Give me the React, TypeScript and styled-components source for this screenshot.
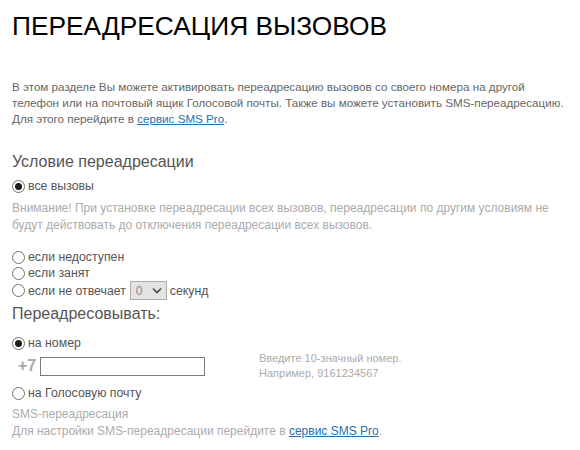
import React from "react";
import styled, { createGlobalStyle } from "styled-components";

const Global = createGlobalStyle`
  html, body { margin: 0; padding: 0; background: #fff; }
  body { font-family: "Liberation Sans", Arial, sans-serif; }
`;

const Page = styled.div`
  padding: 11px 0 0 12px;
  width: 568px;
`;

const Title = styled.h1`
  margin: 0;
  font-size: 26.3px;
  line-height: 30px;
  font-weight: normal;
  color: #000;
`;

const Text = styled.p<{ $tone?: "body" | "muted"; $mt?: number; $lh?: number; $fs?: number }>`
  margin: ${(p) => p.$mt ?? 0}px 0 0 0;
  font-size: ${(p) => p.$fs ?? 12}px;
  line-height: ${(p) => p.$lh ?? 16}px;
  color: ${(p) => (p.$tone === "muted" ? "#ababab" : "#666")};
  white-space: nowrap;
`;

const Link = styled.a`
  color: #2b6ea6;
  text-decoration: underline;
`;

const Heading = styled.h2<{ $mt: number }>`
  margin: ${(p) => p.$mt}px 0 0 0;
  font-size: 16px;
  line-height: 20px;
  font-weight: normal;
  color: #555;
`;

const RadioList = styled.div<{ $mt: number }>`
  margin-top: ${(p) => p.$mt}px;
  display: flex;
  flex-direction: column;
`;

const RadioRow = styled.label<{ $h?: number }>`
  display: flex;
  align-items: center;
  height: ${(p) => p.$h ?? 16}px;
  font-size: 12.3px;
  line-height: 16px;
  color: #555;
  gap: 3px;
`;

const Radio = styled.span<{ $checked?: boolean }>`
  box-sizing: border-box;
  width: 13px;
  height: 13px;
  border-radius: 50%;
  border: 1px solid #707070;
  background: #fff;
  display: inline-flex;
  align-items: center;
  justify-content: center;
  flex: none;
  &::after {
    content: "";
    display: ${(p) => (p.$checked ? "block" : "none")};
    width: 7px;
    height: 7px;
    border-radius: 50%;
    background: #1e1e1e;
  }
`;

const Select = styled.span`
  box-sizing: border-box;
  display: inline-flex;
  align-items: center;
  justify-content: space-between;
  width: 37px;
  height: 19px;
  margin: 0 0 0 1px;
  padding: 0 4px 0 5px;
  background: #e3e3e3;
  border: 1px solid #adadad;
  color: #8a8a8a;
  font-size: 12px;
`;

const PhoneRow = styled.div`
  display: flex;
  align-items: center;
  height: 30px;
`;

const Prefix = styled.span`
  width: 22px;
  margin-left: 6px;
  font-size: 16px;
  font-weight: bold;
  color: #a8a8a8;
`;

const PhoneInput = styled.input`
  box-sizing: border-box;
  width: 165px;
  height: 19px;
  margin: 0;
  border: 1px solid #7a7a7a;
  background: #fff;
  outline: none;
`;

const Hint = styled.div`
  margin-left: 54px;
  font-size: 11px;
  line-height: 15px;
  color: #ababab;
`;

const Chevron = () => (
  <svg width="10" height="7" viewBox="0 0 10 7" aria-hidden="true">
    <path d="M1 1.5 L5 5.5 L9 1.5" fill="none" stroke="#4a4a4a" strokeWidth="1.6" />
  </svg>
);

export default function App() {
  return (
    <>
      <Global />
      <Page>
        <Title>ПЕРЕАДРЕСАЦИЯ ВЫЗОВОВ</Title>
        <Text $mt={38} $fs={11.65}>
          В этом разделе Вы можете активировать переадресацию вызовов со своего номера на другой
          <br />
          телефон или на почтовый ящик Голосовой почты. Также вы можете установить SMS-переадресацию.
          <br />
          Для этого перейдите в <Link href="#">сервис SMS Pro</Link>.
        </Text>

        <Heading $mt={25}>Условие переадресации</Heading>
        <RadioList $mt={6}>
          <RadioRow>
            <Radio $checked />
            все вызовы
          </RadioRow>
        </RadioList>
        <Text $tone="muted" $mt={6} $lh={17}>
          Внимание! При установке переадресации всех вызовов, переадресации по другим условиям не
          <br />
          будут действовать до отключения переадресации всех вызовов.
        </Text>
        <RadioList $mt={15}>
          <RadioRow>
            <Radio />
            если недоступен
          </RadioRow>
          <RadioRow>
            <Radio />
            если занят
          </RadioRow>
          <RadioRow $h={19}>
            <Radio />
            если не отвечает
            <Select>
              0
              <Chevron />
            </Select>
            секунд
          </RadioRow>
        </RadioList>

        <Heading $mt={4}>Переадресовывать:</Heading>
        <RadioList $mt={11}>
          <RadioRow>
            <Radio $checked />
            на номер
          </RadioRow>
        </RadioList>
        <PhoneRow>
          <Prefix>+7</Prefix>
          <PhoneInput type="text" />
          <Hint>
            Введите 10-значный номер.
            <br />
            Например, 9161234567
          </Hint>
        </PhoneRow>
        <RadioList $mt={4}>
          <RadioRow>
            <Radio />
            на Голосовую почту
          </RadioRow>
        </RadioList>
        <Text $tone="muted" $mt={5} $lh={17}>
          SMS-переадресация
          <br />
          Для настройки SMS-переадресации перейдите в <Link href="#">сервис SMS Pro</Link>.
        </Text>
      </Page>
    </>
  );
}
